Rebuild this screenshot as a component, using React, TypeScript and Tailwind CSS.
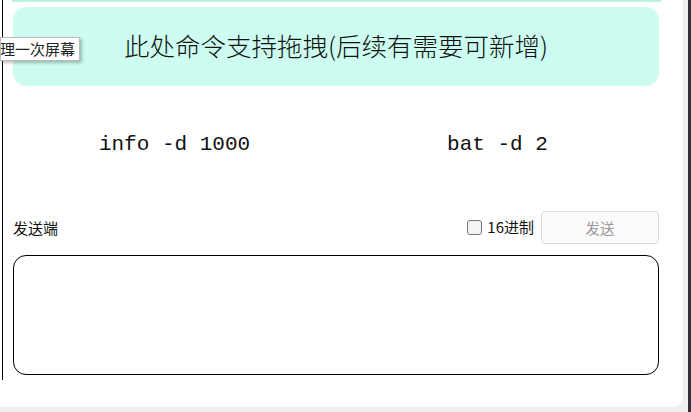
import { useState } from 'react'

const COMMANDS = ['info -d 1000', 'bat -d 2']

const cjk = { fontFamily: '"Noto Sans CJK SC", sans-serif' }

export default function App() {
  const [hex, setHex] = useState(false)

  return (
    <div className="w-[691px] h-[412px] flex bg-[#efefef] overflow-hidden">
      {/* main window surface */}
      <div className="relative w-[683px] h-[407px] bg-white rounded-br-[10px]">
        {/* left frame line */}
        <div className="absolute left-[2px] top-0 w-px h-[380px] bg-black" />

        <div className="pl-[13px] w-[659px]">
          <div className="ml-[-1px] h-[2px] w-[649px] bg-[#b8f3e2]" />

          {/* drag hint */}
          <div
            className="mt-[5px] h-[79px] rounded-[13px] bg-[#ccfdf0] flex items-center justify-center text-[25.5px] text-[#111] pb-[3px]"
            style={{ fontFamily: '"Noto Sans CJK SC", "Liberation Serif", serif', fontWeight: 300 }}
          >
            此处命令支持拖拽(后续有需要可新增)
          </div>

          {/* command list */}
          <div className="grid grid-cols-2 mt-[41px] h-[36px] items-center">
            {COMMANDS.map((c) => (
              <div key={c} className="text-center text-[21px] text-[#111] font-['Liberation_Mono',monospace]">
                {c}
              </div>
            ))}
          </div>

          {/* send bar */}
          <div className="flex items-center mt-[48px] h-[33px]">
            <span className="text-[15px] text-[#111] mt-[1px]" style={cjk}>
              发送端
            </span>
            <label className="ml-auto flex items-center gap-[5px] text-[15px] text-[#111] cursor-pointer">
              <span
                onClick={() => setHex(!hex)}
                className="w-[15px] h-[15px] rounded-[3px] border border-[#777] bg-[#f4f4f4]"
              />
              <span style={cjk}>16进制</span>
            </label>
            <button
              className="ml-[7px] w-[118px] h-[33px] rounded-[4px] border border-[#dcdcdc] bg-[#fbfbfb] text-[14.5px] text-[#999]"
              style={cjk}
            >
              发送
            </button>
          </div>

          <textarea className="mt-[11px] block w-[646px] h-[120px] rounded-[13px] border border-black resize-none outline-none p-2 text-sm" />
        </div>

        {/* tooltip */}
        <div
          className="absolute left-0 top-[37px] h-[24px] w-[80px] overflow-hidden whitespace-nowrap flex items-center justify-end pr-[4px] bg-white border border-[#bbb] text-[15px] text-[#222] shadow-[2px_2px_3px_rgba(0,0,0,0.25)]"
          style={cjk}
        >
          <span className="shrink-0">理一次屏幕</span>
        </div>
      </div>
      <div className="w-[5px] h-full bg-[#efefef]" />
      <div className="w-[3px] h-full bg-[#2f3038]" />
    </div>
  )
}
